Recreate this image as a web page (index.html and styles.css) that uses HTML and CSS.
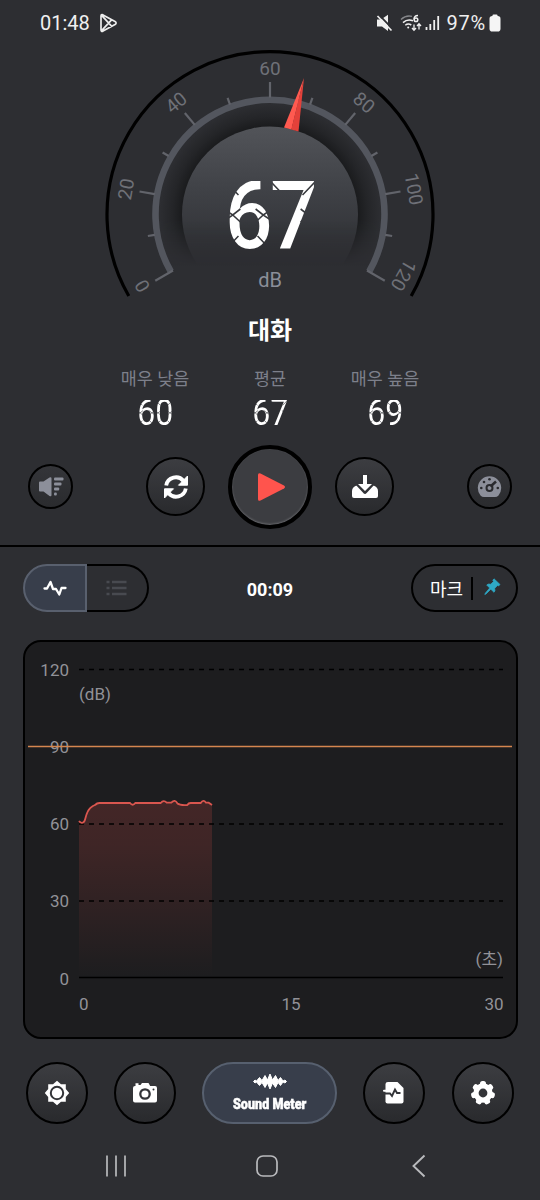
FILE: index.html
```html
<!DOCTYPE html>
<html lang="ko">
<head>
<meta charset="utf-8">
<title>Sound Meter</title>
<link rel="stylesheet" href="styles.css">
</head>
<body>
<div class="screen">
  <header class="status">
    <div class="status-left">
      <span>01:48</span>
      <svg width="19" height="20" viewBox="0 0 19 20" fill="none" stroke="#eee" stroke-width="1.7" stroke-linejoin="round"><path d="M2 3.2Q2 1 4 1.9L16 8.4Q18.2 10 16 11.6L4 18.1Q2 19 2 16.8ZM2.4 2.2L12.8 13.3M2.4 17.8L12.8 6.7"/></svg>
    </div>
    <div class="status-right">
      <svg width="17" height="18" viewBox="0 0 17 18" fill="#f0f0f0"><path d="M1 5.500H5L12 .8V17L6 12.500H1Z"/><path d="M3 .8L16.500 14.800" stroke="#2d2e32" stroke-width="1.800"/><path d="M1.500 2L15.500 16.500" stroke="#f0f0f0" stroke-width="1.700"/></svg>
      <svg class="wifi" width="22" height="18" viewBox="0 0 22 18" fill="none" stroke="#f0f0f0" stroke-width="1.500"><path d="M1 5.500Q6 .8 12 2.400" stroke="#85868a"/><path d="M3 8.600Q7.500 4.500 13 6.800M5.300 11.300Q8 9 11.300 11"/><circle cx="8.200" cy="13.500" r="1" fill="#f0f0f0" stroke="none"/><path d="M18 1.500Q14 1.500 14 5.500"/><circle cx="16" cy="5.800" r="1.800"/><path d="M14 10.500V16M12 14L14 16.300L16 14M19 15.500V10M17 12L19 9.700L21 12" stroke-width="1.300"/></svg>
      <svg class="signal" width="15" height="16" viewBox="0 0 15 16" stroke="#f0f0f0" stroke-width="1.800"><path d="M1.500 15V12M5.300 15V9M9.200 15V5M13.200 15V1"/></svg>
      <span class="percent">97%</span>
      <svg class="battery" width="12" height="18" viewBox="0 0 12 18" fill="#f5f5f5"><rect x="3.500" y=".5" width="5" height="4" rx="1"/><rect x=".5" y="2" width="11" height="15.500" rx="2.800"/></svg>
    </div>
  </header>

  <section class="gauge">
    <svg width="340" height="256" viewBox="100 46 340 256">
      <defs>
        <linearGradient id="dial" x1="0" y1="0" x2="0" y2="1">
          <stop offset="0" stop-color="#525459"/><stop offset=".35" stop-color="#404247"/><stop offset=".78" stop-color="#2d2e32"/><stop offset="1" stop-color="#2d2e32"/>
        </linearGradient>
        <radialGradient id="halo" gradientUnits="userSpaceOnUse" cx="270" cy="214.500" r="111">
          <stop offset=".77" stop-color="#2d2e32"/><stop offset=".78" stop-color="#191a1c"/><stop offset=".88" stop-color="#242528"/><stop offset="1" stop-color="#2d2e32"/>
        </radialGradient>
        <linearGradient id="haloFade" x1="0" y1="0" x2="0" y2="1">
          <stop offset="0" stop-color="#fff"/><stop offset=".52" stop-color="#fff"/><stop offset=".72" stop-color="#000"/>
        </linearGradient>
        <mask id="haloMask" maskUnits="userSpaceOnUse" x="155" y="100" width="230" height="230"><rect x="155" y="100" width="230" height="230" fill="url(#haloFade)"/></mask>
      </defs>
      <g mask="url(#haloMask)">
        <circle cx="270" cy="214.500" r="111" fill="url(#halo)"/>
        <circle cx="270" cy="214.500" r="88" fill="url(#dial)"/>
      </g>
      <path d="M128.800 296A163 163 0 1 1 411.200 296" fill="none" stroke="#000" stroke-width="3.200"/>
      <path d="M170.800 271.500A114.500 114.500 0 1 1 369.200 271.500" fill="none" stroke="#53565e" stroke-width="6.600"/>
      <g transform="translate(270 214.500)" stroke="#62646b" stroke-width="2.200">
        <path d="M0 -112V-132.500" transform="rotate(-120)"/><path d="M0 -117V-124" transform="rotate(-100)"/>
        <path d="M0 -117V-132.500" transform="rotate(-80)"/><path d="M0 -117V-124" transform="rotate(-60)"/>
        <path d="M0 -117V-132.500" transform="rotate(-40)"/><path d="M0 -117V-124" transform="rotate(-20)"/>
        <path d="M0 -117V-132.500"/>
        <path d="M0 -117V-124" transform="rotate(20)"/><path d="M0 -117V-132.500" transform="rotate(40)"/>
        <path d="M0 -117V-124" transform="rotate(60)"/><path d="M0 -117V-132.500" transform="rotate(80)"/>
        <path d="M0 -117V-124" transform="rotate(100)"/><path d="M0 -112V-132.500" transform="rotate(120)"/>
      </g>
      <g class="scale" transform="translate(270 214.500)">
        <text transform="rotate(-120)" x="2" y="-139.500">0</text>
        <text transform="rotate(-80)" y="-139.500">20</text>
        <text transform="rotate(-40)" y="-139.500">40</text>
        <text y="-139.500">60</text>
        <text transform="rotate(40)" y="-139.500">80</text>
        <text transform="rotate(80)" y="-139.500">100</text>
        <text transform="rotate(120)" x="-14" y="-139.500">120</text>
      </g>
      <path d="M304 78L284 127.500L291.500 129.500Z" fill="#ff5a50"/>
      <path d="M304 78L291.200 129.400L298.500 131.500Z" fill="#e3413a"/>
    </svg>
    <div class="reading">
      <div class="lcd lcd-big"><span>6</span><span>7</span></div>
      <div class="unit">dB</div>
    </div>
  </section>

  <h1 class="level">대화</h1>

  <section class="stats">
    <div class="stat"><span class="stat-name">매우 낮음</span><div class="lcd"><span>6</span><span>0</span></div></div>
    <div class="stat"><span class="stat-name">평균</span><div class="lcd"><span>6</span><span>7</span></div></div>
    <div class="stat"><span class="stat-name">매우 높음</span><div class="lcd"><span>6</span><span>9</span></div></div>
  </section>

  <section class="controls">
    <button class="round small"><svg width="26" height="22" viewBox="0 0 26 22" fill="#8c8f9a"><path d="M1 6.500Q1 5.500 2 5.500H5.500L11.500 1.500Q13.500 .5 13.500 2.500V19Q13.500 21 11.500 20L5.500 15.500H2Q1 15.500 1 14.500Z"/><rect x="16" y="1.500" width="9.500" height="3" rx="1"/><rect x="16" y="6.500" width="7.500" height="3" rx="1"/><rect x="16" y="11.500" width="5.200" height="3" rx="1"/><rect x="16" y="16.500" width="2.800" height="3" rx="1"/></svg></button>
    <button class="round medium gap-a"><svg width="26" height="24" viewBox="0 0 26 24" fill="none" stroke="#fff" stroke-width="3.800"><path d="M3.200 10.500A9.800 9.800 0 0 1 20.500 6M22.800 13.500A9.800 9.800 0 0 1 5.500 18"/><path d="M24.500 1V10.200H15.500ZM1.500 23V13.800H10.500Z" fill="#fff" stroke="#fff" stroke-width="1" stroke-linejoin="round"/></svg></button>
    <button class="round large"><svg width="30" height="30" viewBox="0 0 30 30" fill="#ff544d"><path d="M3 3Q3 .3 5.500 1.500L29 13.500Q31 15 29 16.500L5.500 28.500Q3 29.700 3 27Z"/></svg></button>
    <button class="round medium"><svg width="28" height="26" viewBox="0 0 28 26" fill="#fff"><path d="M5.500 11.500H22.500Q27 13 27 17V22Q27 24 25 24H3Q1 24 1 22V17Q1 13 5.500 11.500Z"/><path d="M12 1H16V10H21L14 17.500L7 10H12Z" stroke="#333438" stroke-width="4.500" stroke-linejoin="round"/><path d="M12 1H16V10H21L14 17L7 10H12Z"/></svg></button>
    <button class="round small gap-b"><svg width="25" height="23" viewBox="0 0 25 23"><path d="M3.500 20.500A11.700 11.700 0 1 1 21.500 20.500Q20 22 18 22H7Q5 22 3.500 20.500Z" fill="#8c8f9a"/><g fill="#292a2e"><circle cx="4.300" cy="13" r="1.300"/><circle cx="7" cy="7" r="1.300"/><circle cx="12.500" cy="4.300" r="1.300"/><circle cx="20.800" cy="13" r="1.300"/></g><path d="M13.500 11.500L19 6.500" stroke="#292a2e" stroke-width="2.500"/><circle cx="12.500" cy="13" r="3" fill="none" stroke="#292a2e" stroke-width="2"/></svg></button>
  </section>

  <section class="toolbar">
    <div class="toggle">
      <div class="toggle-on"><svg width="24" height="18" viewBox="0 0 24 18" fill="none" stroke="#fff" stroke-width="2.300" stroke-linejoin="round" stroke-linecap="round"><path d="M1.500 9.500H4L7.500 3L10 10H13L16.300 15.500L18.500 9H22.500"/></svg></div>
      <div class="toggle-off"><svg width="21" height="16" viewBox="0 0 21 16" stroke="#484a50" stroke-width="2.500"><path d="M.5 2H3.500M6 2H20.500M.5 8H3.500M6 8H20.500M.5 14H3.500M6 14H20.500"/></svg></div>
    </div>
    <div class="timer">00:09</div>
    <div class="mark"><span>마크</span><i></i><svg width="17" height="18" viewBox="0 0 17 18" fill="#2ea9c6"><path d="M10 .8L16 6.500L14.500 8L13.500 7.500L10.700 10.300Q11.500 13 10 14.300L6.800 11.200L2 16L.8 16.500L1.300 15.200L5.700 10L2.700 7Q4.200 5.500 6.800 6.200L9.500 3.500L8.800 2.200Z" stroke="#2ea9c6" stroke-width=".7"/></svg></div>
  </section>

  <section class="chart">
    <svg width="491" height="395" viewBox="25 642 491 395">
      <defs><linearGradient id="area" x1="0" y1="0" x2="0" y2="1"><stop offset="0" stop-color="#ff544d" stop-opacity=".17"/><stop offset=".25" stop-color="#ff544d" stop-opacity=".15"/><stop offset="1" stop-color="#ff544d" stop-opacity="0"/></linearGradient></defs>
      <path d="M79 821L81.700 823L84 821.300L86.700 813.300L90 808.300L95 805L99.300 803H130L132.700 804.700L135.300 803H160.700L163.700 801L166.700 802.700H171.300L175 800.700L180 805H187.300L190.700 803H200.700L203.300 801L206 802.700H208.700L212 805V977H79Z" fill="url(#area)"/>
      <g stroke="#000" stroke-width="1.500"><path d="M79 669.500H503M79 824H503M79 901H503" stroke-dasharray="5 5"/><path d="M79 977.500H503"/></g>
      <g class="axis">
        <g text-anchor="end"><text x="69" y="676">120</text><text x="69" y="753">90</text><text x="69" y="830">60</text><text x="69" y="907">30</text><text x="69" y="984.500">0</text><text x="503.500" y="1010">30</text><text x="503" y="965">(초)</text></g>
        <text x="79" y="700">(dB)</text><text x="79" y="1010">0</text><text x="291" y="1010" text-anchor="middle">15</text>
      </g>
      <path d="M28 746.500H512" stroke="#d5864f" stroke-width="1.300"/>
      <path d="M79 821C80.500 823 83 824 84.500 821C86 818 86 812 90 808.300C92 806.500 93 805.500 95 805Q97 803 99.300 803H130Q132.700 806.500 135.300 803H160.700Q163.700 799.500 166.700 802.700H171.300Q175 798.500 177.500 803.500Q180 805.500 187.300 805Q188.500 803 190.700 803H200.700Q203.300 799 206 802.700H208.700L212 805" fill="none" stroke="#d9564f" stroke-width="1.800"/>
    </svg>
  </section>

  <nav class="tabs">
    <button class="round tab"><svg width="26" height="26" viewBox="0 0 26 26"><path d="M13 .8L17 4.200H21.800V9L25.200 13L21.800 17V21.800H17L13 25.200L9 21.800H4.200V17L.8 13L4.200 9V4.200H9Z" fill="#fff"/><circle cx="13" cy="13" r="6.200" fill="#fff" stroke="#333438" stroke-width="2"/></svg></button>
    <button class="round tab"><svg width="26" height="22" viewBox="0 0 26 22"><path d="M3.500 1.200H6.500V3H8.500L10 1H16.500L18.200 4H23Q25 4 25 6V18.500Q25 20.500 23 20.500H3Q1 20.500 1 18.500V6Q1 4 3 4H3.500Z" fill="#fff"/><circle cx="13" cy="12" r="4.700" fill="#fff" stroke="#333438" stroke-width="2.300"/><circle cx="21.500" cy="7.500" r="1" fill="#333438"/></svg></button>
    <div class="tab-current">
      <svg width="36" height="17" viewBox="0 0 36 17" fill="#fff" stroke="#fff" stroke-width="1" stroke-linejoin="round"><path d="M1.500 8.500L3 7L4.500 8L7.500 4.500L10 7.500L13 2.500L15.500 7L18 1L20.500 7L23.500 2.500L26 7.500L28.500 4.500L31 8L33 7L34.500 8.500L33 10L31 9L28.500 12.500L26 9.500L23.500 14.500L20.500 10L18 16L15.500 10L13 14.500L10 9.500L7.500 12.500L4.500 9L3 10Z"/></svg>
      <span>Sound Meter</span>
    </div>
    <button class="round tab"><svg width="22" height="24" viewBox="0 0 22 24"><path d="M5 1H14.500L20.500 7V20.500Q20.500 22.500 18.500 22.500H4.500Q2.500 22.500 2.500 20.500V3Q2.500 1 5 1Z" fill="#fff"/><path d="M2 12.500H7L9 15L12 8.500L14 12H17.500" fill="none" stroke="#333438" stroke-width="1.900"/><path d="M1 9.800H6.500" stroke="#fff" stroke-width="2" stroke-linecap="round"/></svg></button>
    <button class="round tab"><svg width="26" height="26" viewBox="-13 -13 26 26"><g fill="#fff"><circle r="9.700"/><g id="tooth"><rect x="-3" y="-12" width="6" height="6" rx="2.500"/></g><use href="#tooth" transform="rotate(51.430)"/><use href="#tooth" transform="rotate(102.860)"/><use href="#tooth" transform="rotate(154.290)"/><use href="#tooth" transform="rotate(205.710)"/><use href="#tooth" transform="rotate(257.140)"/><use href="#tooth" transform="rotate(308.570)"/></g><circle r="4.400" fill="#333438"/></svg></button>
  </nav>

  <footer class="sysnav">
    <svg width="22" height="24" viewBox="0 0 22 24" stroke="#b9babd" stroke-width="1.700"><path d="M2 1.500V22.500M11 1.500V22.500M20 1.500V22.500"/></svg>
    <svg class="home" width="24" height="24" viewBox="0 0 24 24" fill="none" stroke="#b9babd" stroke-width="1.700"><rect x="2" y="2" width="20" height="20" rx="6"/></svg>
    <svg width="16" height="24" viewBox="0 0 16 24" fill="none" stroke="#b9babd" stroke-width="1.900"><path d="M13.500 1.500L2.500 12L13.500 22.500"/></svg>
  </footer>
</div>
</body>
</html>
```
FILE: styles.css
```css
* { box-sizing: border-box; }
body {
  margin: 0;
  background: #2d2e32;
  color: #fff;
  font-family: Roboto, "Noto Sans CJK KR", sans-serif;
}
svg { display: block; flex: none; }
.screen {
  width: 540px;
  height: 1200px;
  display: flex;
  flex-direction: column;
  overflow: hidden;
}
.status {
  height: 46px;
  padding: 0 39px 0 40px;
  display: flex;
  justify-content: space-between;
  align-items: center;
  font-size: 20px;
  color: #f0f0f0;
}
.status-left, .status-right { display: flex; align-items: center; }
.status-left { gap: 9px; }
.wifi { margin-left: 7px; }
.signal { margin: 0 6px 0 3px; }
.percent { letter-spacing: .8px; }
.battery { margin-left: 3px; }

.gauge {
  height: 256px;
  display: grid;
  justify-items: center;
}
.gauge > * { grid-area: 1 / 1; }
.scale {
  fill: #6f7178;
  font-size: 19px;
  font-weight: 400;
  text-anchor: middle;
}
.reading {
  padding-top: 135px;
  display: flex;
  flex-direction: column;
  align-items: center;
}

/* Digits painted with a sliced fill, so the cuts show only inside the strokes */
.lcd {
  --w: 20px;
  --h: 26px;
  display: flex;
  gap: 0;
  font-size: 36.500px;
  font-weight: 400;
}
.lcd span {
  width: var(--w);
  height: var(--h);
  line-height: var(--h);
  text-align: center;
  margin: 0 -1.300px;
  color: transparent;
  background: url("data:image/svg+xml,%3Csvg xmlns='http://www.w3.org/2000/svg' viewBox='0 0 48 69' preserveAspectRatio='none'%3E%3Crect width='48' height='69' fill='white'/%3E%3Cpath d='M0 0L14 14M48 0L34 14M0 69L14 55M48 69L34 55M0 39L8 34L16 41M0 29L8 34L16 28M48 39L40 34L32 41M48 29L40 34L32 28' fill='none' stroke='%2336383c' stroke-width='1.6'/%3E%3C/svg%3E") center / 100% 100% no-repeat;
  -webkit-background-clip: text;
  background-clip: text;
  transform: scaleX(.88);
}
.lcd-big {
  --w: 52px;
  --h: 69px;
  font-size: 95px;
  font-weight: 500;
}
.lcd-big span { margin: 0 -3.500px; }
.unit {
  margin-top: 18px;
  font-size: 20px;
  line-height: 24px;
  color: #8b8e99;
}
.level {
  margin: 0;
  height: 57px;
  line-height: 58px;
  font-size: 24px;
  font-weight: 700;
  text-align: center;
}
.stats {
  height: 86px;
  padding: 8px 97.500px 0;
  display: grid;
  grid-template-columns: repeat(3, 115px);
}
.stat { display: flex; flex-direction: column; align-items: center; }
.stat-name {
  height: 33px;
  line-height: 24px;
  font-size: 17.400px;
  color: #7d808b;
}

.controls {
  height: 102px;
  padding: 0 28px 17px;
  display: flex;
  justify-content: space-between;
  align-items: center;
  border-bottom: 2px solid #000;
}
.round {
  padding: 0;
  border: 2px solid #000;
  border-radius: 50%;
  background: linear-gradient(#3c3d41, #292a2d);
  display: flex;
  align-items: center;
  justify-content: center;
}
.small { width: 45px; height: 45px; background: linear-gradient(#343539, #2a2b2e); }
.medium { width: 59px; height: 59px; }
.large { width: 84px; height: 84px; border-width: 4px; background: #3c3d41; box-shadow: inset 0 -1px 2px #66676b; }
.gap-a { margin-left: 50px; }
.gap-b { margin-left: 50px; }

.toolbar {
  height: 82px;
  padding: 0 22px 0 23px;
  display: grid;
  grid-template-columns: 127px 1fr 107px;
  align-items: center;
}
.toggle, .mark { height: 48px; display: flex; }
.toggle-on, .toggle-off { display: flex; align-items: center; justify-content: center; border: 2px solid #000; }
.toggle-on { width: 64px; background: #383e4b; border-color: #59606e; border-radius: 24px 0 0 24px; }
.toggle-off { width: 62px; border-left: 0; border-radius: 0 24px 24px 0; padding-right: 2px; }
.timer { text-align: center; font-size: 18px; font-weight: 700; padding: 2px 21px 0 0; }
.mark {
  align-items: center;
  border: 2px solid #000;
  border-radius: 24px;
  font-size: 18px;
  padding-left: 17px;
}
.mark i { width: 2px; height: 23px; background: #000; margin: 0 11px 0 8px; }
.mark svg { margin-bottom: 3px; }

.chart {
  width: 495px;
  height: 399px;
  margin: 11px 0 0 23px;
  border: 2px solid #000;
  border-radius: 18px;
  background: #1d1d1f;
}
.axis { fill: #929298; font-size: 17px; }

.tabs {
  height: 108px;
  padding: 0 26.500px 0 26px;
  display: flex;
  justify-content: space-between;
  align-items: center;
}
.tab { width: 62px; height: 62px; border-width: 2.500px; }
.tab-current {
  width: 135px;
  height: 62px;
  border: 2px solid #57606f;
  border-radius: 31px;
  background: #383e4b;
  display: flex;
  flex-direction: column;
  align-items: center;
  padding-top: 9px;
}
.tab-current span {
  font-size: 15px;
  line-height: 17px;
  margin-top: 6px;
  font-weight: 900;
  white-space: nowrap;
  -webkit-text-stroke: .5px #fff;
  transform: scaleX(.84);
}
.sysnav {
  height: 38px;
  padding: 0 113px 0 105px;
  display: flex;
  justify-content: space-between;
  align-items: center;
}
.home { margin-right: 5px; }
```
